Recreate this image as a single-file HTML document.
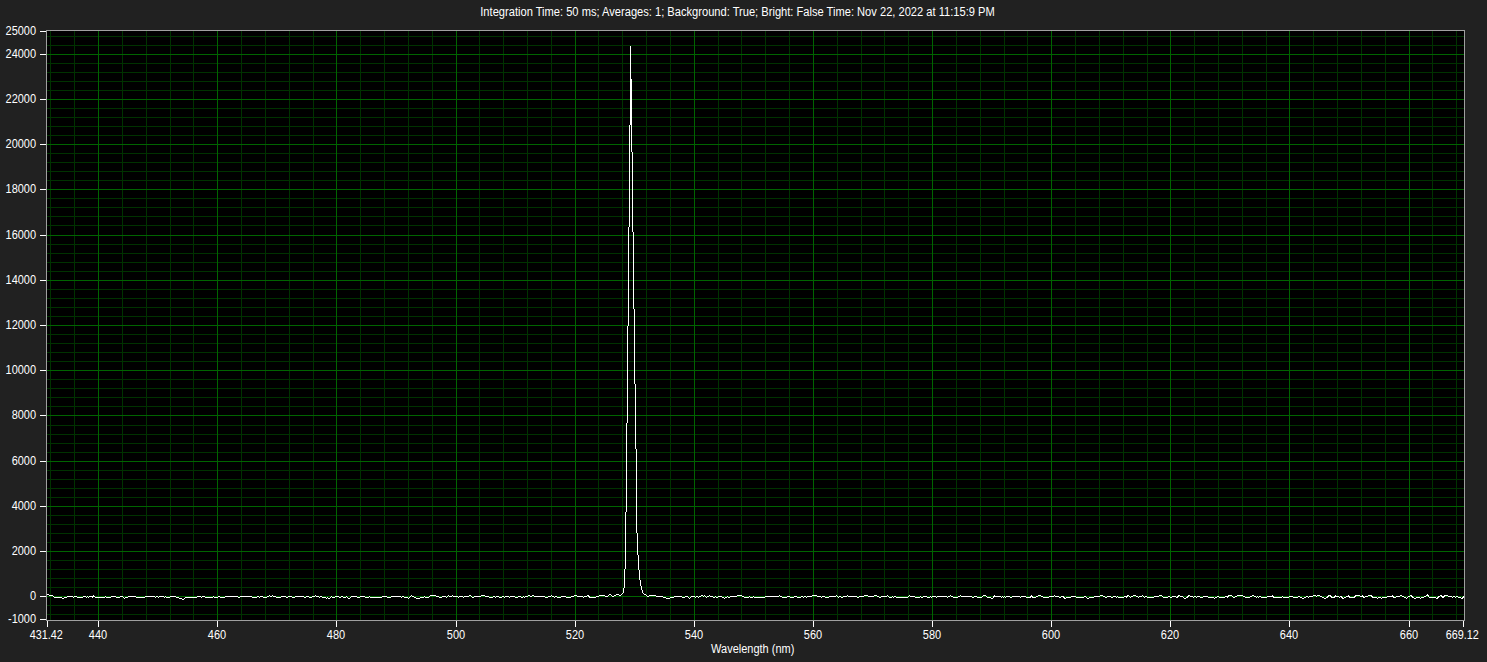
<!DOCTYPE html>
<html><head><meta charset="utf-8"><title>Spectrum</title>
<style>html,body{margin:0;padding:0;background:#212121;overflow:hidden}svg{display:block}text{font-family:"Liberation Sans",Arial,sans-serif;font-size:11px;fill:#fff}</style>
</head><body>
<svg width="1487" height="662" viewBox="0 0 1487 662" shape-rendering="crispEdges">
<rect x="0" y="0" width="1487" height="662" fill="#212121"/>
<rect x="46" y="30" width="1419" height="591" fill="#a0a0a0"/>
<rect x="47" y="31" width="1417" height="589" fill="#000"/>
<path fill="#003200" d="M50 31h1v589h-1zM74 31h1v589h-1zM122 31h1v589h-1zM146 31h1v589h-1zM170 31h1v589h-1zM193 31h1v589h-1zM241 31h1v589h-1zM265 31h1v589h-1zM289 31h1v589h-1zM313 31h1v589h-1zM360 31h1v589h-1zM384 31h1v589h-1zM408 31h1v589h-1zM432 31h1v589h-1zM479 31h1v589h-1zM503 31h1v589h-1zM527 31h1v589h-1zM551 31h1v589h-1zM598 31h1v589h-1zM622 31h1v589h-1zM646 31h1v589h-1zM670 31h1v589h-1zM718 31h1v589h-1zM741 31h1v589h-1zM765 31h1v589h-1zM789 31h1v589h-1zM837 31h1v589h-1zM861 31h1v589h-1zM884 31h1v589h-1zM908 31h1v589h-1zM956 31h1v589h-1zM980 31h1v589h-1zM1004 31h1v589h-1zM1027 31h1v589h-1zM1075 31h1v589h-1zM1099 31h1v589h-1zM1123 31h1v589h-1zM1147 31h1v589h-1zM1194 31h1v589h-1zM1218 31h1v589h-1zM1242 31h1v589h-1zM1266 31h1v589h-1zM1313 31h1v589h-1zM1337 31h1v589h-1zM1361 31h1v589h-1zM1385 31h1v589h-1zM1432 31h1v589h-1zM1456 31h1v589h-1zM47 614h1417v1h-1417zM47 605h1417v1h-1417zM47 587h1417v1h-1417zM47 578h1417v1h-1417zM47 569h1417v1h-1417zM47 560h1417v1h-1417zM47 542h1417v1h-1417zM47 533h1417v1h-1417zM47 524h1417v1h-1417zM47 515h1417v1h-1417zM47 497h1417v1h-1417zM47 488h1417v1h-1417zM47 479h1417v1h-1417zM47 470h1417v1h-1417zM47 452h1417v1h-1417zM47 443h1417v1h-1417zM47 434h1417v1h-1417zM47 425h1417v1h-1417zM47 406h1417v1h-1417zM47 397h1417v1h-1417zM47 388h1417v1h-1417zM47 379h1417v1h-1417zM47 361h1417v1h-1417zM47 352h1417v1h-1417zM47 343h1417v1h-1417zM47 334h1417v1h-1417zM47 316h1417v1h-1417zM47 307h1417v1h-1417zM47 298h1417v1h-1417zM47 289h1417v1h-1417zM47 271h1417v1h-1417zM47 262h1417v1h-1417zM47 253h1417v1h-1417zM47 244h1417v1h-1417zM47 225h1417v1h-1417zM47 216h1417v1h-1417zM47 207h1417v1h-1417zM47 198h1417v1h-1417zM47 180h1417v1h-1417zM47 171h1417v1h-1417zM47 162h1417v1h-1417zM47 153h1417v1h-1417zM47 135h1417v1h-1417zM47 126h1417v1h-1417zM47 117h1417v1h-1417zM47 108h1417v1h-1417zM47 90h1417v1h-1417zM47 81h1417v1h-1417zM47 72h1417v1h-1417zM47 63h1417v1h-1417zM47 45h1417v1h-1417zM47 36h1417v1h-1417z"/>
<path fill="#006400" d="M98 31h1v589h-1zM217 31h1v589h-1zM336 31h1v589h-1zM456 31h1v589h-1zM575 31h1v589h-1zM694 31h1v589h-1zM813 31h1v589h-1zM932 31h1v589h-1zM1051 31h1v589h-1zM1170 31h1v589h-1zM1289 31h1v589h-1zM1409 31h1v589h-1zM47 596h1417v1h-1417zM47 551h1417v1h-1417zM47 506h1417v1h-1417zM47 461h1417v1h-1417zM47 415h1417v1h-1417zM47 370h1417v1h-1417zM47 325h1417v1h-1417zM47 280h1417v1h-1417zM47 235h1417v1h-1417zM47 189h1417v1h-1417zM47 144h1417v1h-1417zM47 99h1417v1h-1417zM47 54h1417v1h-1417z"/>
<path fill="#fff" d="M40 619h6v1h-6zM40 596h6v1h-6zM40 551h6v1h-6zM40 506h6v1h-6zM40 461h6v1h-6zM40 415h6v1h-6zM40 370h6v1h-6zM40 325h6v1h-6zM40 280h6v1h-6zM40 235h6v1h-6zM40 189h6v1h-6zM40 144h6v1h-6zM40 99h6v1h-6zM40 54h6v1h-6zM40 31h6v1h-6zM47 621h1v6h-1zM98 621h1v6h-1zM217 621h1v6h-1zM336 621h1v6h-1zM456 621h1v6h-1zM575 621h1v6h-1zM694 621h1v6h-1zM813 621h1v6h-1zM932 621h1v6h-1zM1051 621h1v6h-1zM1170 621h1v6h-1zM1289 621h1v6h-1zM1409 621h1v6h-1zM1463 621h1v6h-1z"/>
<path fill="#fff" d="M47 594h2v1h-2zM49 595h4v1h-4zM53 596h1v1h-1zM54 597h8v1h-8zM62 598h2v1h-2zM64 597h3v1h-3zM67 596h6v1h-6zM73 597h1v1h-1zM74 596h3v1h-3zM77 597h6v1h-6zM83 596h3v1h-3zM86 597h1v1h-1zM87 596h1v1h-1zM88 597h1v1h-1zM89 596h3v1h-3zM92 596h1v2h-1zM93 595h1v2h-1zM94 596h1v1h-1zM95 597h10v1h-10zM105 596h1v1h-1zM106 597h5v1h-5zM111 596h5v1h-5zM116 597h4v1h-4zM120 596h3v1h-3zM123 597h1v1h-1zM124 598h1v1h-1zM125 597h3v1h-3zM128 596h8v1h-8zM136 597h9v1h-9zM145 596h10v1h-10zM155 597h1v1h-1zM156 596h2v1h-2zM158 597h1v1h-1zM159 596h5v1h-5zM164 597h1v1h-1zM165 596h1v1h-1zM166 597h4v1h-4zM170 596h6v1h-6zM176 597h3v1h-3zM179 598h3v1h-3zM182 599h2v1h-2zM184 598h1v1h-1zM185 597h12v1h-12zM197 596h4v1h-4zM201 597h1v1h-1zM202 596h3v1h-3zM205 597h8v1h-8zM213 596h1v1h-1zM214 597h4v1h-4zM218 596h2v1h-2zM220 597h5v1h-5zM225 596h13v1h-13zM238 597h2v1h-2zM240 596h12v1h-12zM252 597h5v1h-5zM257 596h2v1h-2zM259 597h1v1h-1zM260 596h3v1h-3zM263 597h4v1h-4zM267 596h2v1h-2zM269 595h1v1h-1zM270 596h2v1h-2zM272 595h1v1h-1zM273 596h3v1h-3zM276 597h5v1h-5zM281 596h5v1h-5zM286 597h2v1h-2zM288 596h4v1h-4zM292 597h3v1h-3zM295 596h9v1h-9zM304 597h2v1h-2zM306 596h3v1h-3zM309 597h3v1h-3zM312 596h3v1h-3zM315 595h1v1h-1zM316 596h3v1h-3zM319 597h1v1h-1zM320 596h2v1h-2zM322 597h4v1h-4zM326 598h1v1h-1zM327 597h1v1h-1zM328 598h2v1h-2zM330 597h1v1h-1zM331 596h1v1h-1zM332 597h3v1h-3zM335 596h4v1h-4zM339 597h2v1h-2zM341 596h2v1h-2zM343 597h3v1h-3zM346 596h1v1h-1zM347 597h1v1h-1zM348 598h2v1h-2zM350 597h1v1h-1zM351 596h6v1h-6zM357 597h3v1h-3zM360 596h5v1h-5zM365 597h4v1h-4zM369 596h1v1h-1zM370 597h12v1h-12zM382 596h5v1h-5zM387 597h4v1h-4zM391 596h10v1h-10zM401 597h1v1h-1zM402 596h2v1h-2zM404 597h4v1h-4zM408 598h1v1h-1zM409 597h1v1h-1zM410 596h1v1h-1zM411 595h1v1h-1zM412 596h2v1h-2zM414 597h2v1h-2zM416 598h4v1h-4zM420 597h4v1h-4zM424 596h1v1h-1zM425 597h4v1h-4zM429 596h1v1h-1zM430 595h6v1h-6zM436 596h3v1h-3zM439 597h3v1h-3zM442 596h4v1h-4zM446 597h1v1h-1zM447 596h1v1h-1zM448 595h1v1h-1zM449 596h3v1h-3zM452 595h1v1h-1zM453 596h5v1h-5zM458 597h1v1h-1zM459 596h4v1h-4zM463 597h1v1h-1zM464 596h5v1h-5zM469 595h2v1h-2zM471 596h1v1h-1zM472 597h2v1h-2zM474 596h7v1h-7zM481 595h4v1h-4zM485 596h4v1h-4zM489 597h4v1h-4zM493 596h2v1h-2zM495 597h1v1h-1zM496 596h3v1h-3zM499 597h3v1h-3zM502 596h2v1h-2zM504 597h1v1h-1zM505 596h4v1h-4zM509 597h1v1h-1zM510 596h5v1h-5zM515 597h3v1h-3zM518 596h3v1h-3zM521 597h2v1h-2zM523 596h1v1h-1zM524 597h1v1h-1zM525 596h3v1h-3zM528 595h2v1h-2zM530 596h2v1h-2zM532 595h2v1h-2zM534 596h11v1h-11zM545 597h3v1h-3zM548 596h3v1h-3zM551 595h1v1h-1zM552 596h2v1h-2zM554 597h1v1h-1zM555 596h2v1h-2zM557 597h4v1h-4zM561 596h5v1h-5zM566 597h5v1h-5zM571 596h3v1h-3zM574 595h3v1h-3zM577 596h6v1h-6zM583 597h1v1h-1zM584 596h3v1h-3zM587 595h1v1h-1zM588 595h1v2h-1zM589 596h1v2h-1zM590 597h6v1h-6zM596 596h3v1h-3zM599 595h6v1h-6zM605 596h3v1h-3zM608 595h1v1h-1zM609 594h2v1h-2zM611 595h1v1h-1zM612 596h2v1h-2zM614 595h2v1h-2zM616 594h3v1h-3zM619 595h2v1h-2zM621 594h1v1h-1zM622 593h1v1h-1zM623 588h1v5h-1zM624 569h1v19h-1zM625 512h1v57h-1zM626 423h1v89h-1zM627 326h1v97h-1zM628 227h1v99h-1zM629 125h1v102h-1zM630 46h1v79h-1zM631 79h1v73h-1zM632 152h1v80h-1zM633 232h1v77h-1zM634 309h1v75h-1zM635 384h1v65h-1zM636 449h1v84h-1zM637 533h1v22h-1zM638 555h1v15h-1zM639 570h1v10h-1zM640 580h1v6h-1zM641 586h1v4h-1zM642 590h1v3h-1zM643 593h1v1h-1zM644 594h2v1h-2zM646 595h1v1h-1zM647 596h2v1h-2zM649 595h7v1h-7zM656 596h7v1h-7zM663 597h3v1h-3zM666 598h4v1h-4zM670 597h4v1h-4zM674 596h8v1h-8zM682 597h3v1h-3zM685 596h3v1h-3zM688 597h1v1h-1zM689 598h1v1h-1zM690 597h1v1h-1zM691 596h4v1h-4zM695 597h1v1h-1zM696 596h2v1h-2zM698 597h1v1h-1zM699 596h2v1h-2zM701 595h2v1h-2zM703 596h1v1h-1zM704 595h1v1h-1zM705 596h1v1h-1zM706 597h1v1h-1zM707 596h2v1h-2zM709 595h1v1h-1zM710 596h3v1h-3zM713 597h2v1h-2zM715 596h1v1h-1zM716 597h2v1h-2zM718 596h4v1h-4zM722 597h2v1h-2zM724 598h1v1h-1zM725 597h2v1h-2zM727 596h1v1h-1zM728 597h2v1h-2zM730 596h7v1h-7zM737 595h5v1h-5zM742 596h2v1h-2zM744 597h5v1h-5zM749 596h1v1h-1zM750 597h3v1h-3zM753 596h1v1h-1zM754 597h11v1h-11zM765 596h14v1h-14zM779 595h1v1h-1zM780 596h2v1h-2zM782 597h5v1h-5zM787 596h3v1h-3zM790 597h4v1h-4zM794 596h3v1h-3zM797 597h4v1h-4zM801 596h2v1h-2zM803 597h1v1h-1zM804 596h2v1h-2zM806 597h1v1h-1zM807 596h5v1h-5zM812 595h5v1h-5zM817 596h4v1h-4zM821 597h1v1h-1zM822 596h3v1h-3zM825 597h4v1h-4zM829 596h7v1h-7zM836 595h1v1h-1zM837 596h1v1h-1zM838 597h1v1h-1zM839 596h2v1h-2zM841 597h2v1h-2zM843 596h4v1h-4zM847 595h1v1h-1zM848 596h9v1h-9zM857 597h2v1h-2zM859 596h5v1h-5zM864 595h4v1h-4zM868 596h6v1h-6zM874 595h3v1h-3zM877 596h2v1h-2zM879 597h2v1h-2zM881 596h6v1h-6zM887 595h1v1h-1zM888 596h1v1h-1zM889 597h3v1h-3zM892 596h1v1h-1zM893 597h1v1h-1zM894 596h2v1h-2zM896 597h12v1h-12zM908 596h1v1h-1zM909 595h1v1h-1zM910 596h5v1h-5zM915 597h5v1h-5zM920 596h1v1h-1zM921 597h2v1h-2zM923 596h4v1h-4zM927 597h3v1h-3zM930 596h1v1h-1zM931 597h1v1h-1zM932 596h4v1h-4zM936 597h1v1h-1zM937 596h10v1h-10zM947 597h1v1h-1zM948 596h2v1h-2zM950 595h1v1h-1zM951 596h2v1h-2zM953 597h5v1h-5zM958 596h2v1h-2zM960 595h1v1h-1zM961 596h11v1h-11zM972 597h2v1h-2zM974 596h3v1h-3zM977 597h5v1h-5zM982 596h1v1h-1zM983 595h3v1h-3zM986 596h1v1h-1zM987 597h4v1h-4zM991 598h2v1h-2zM993 596h1v2h-1zM994 595h1v2h-1zM995 596h6v1h-6zM1001 597h1v1h-1zM1002 596h1v1h-1zM1003 597h1v1h-1zM1004 596h1v1h-1zM1005 597h1v1h-1zM1006 596h4v1h-4zM1010 597h2v1h-2zM1012 596h8v1h-8zM1020 597h1v1h-1zM1021 596h5v1h-5zM1026 597h4v1h-4zM1030 596h1v2h-1zM1031 595h1v2h-1zM1032 596h1v2h-1zM1033 597h3v1h-3zM1036 596h2v1h-2zM1038 595h3v1h-3zM1041 596h2v1h-2zM1043 597h6v1h-6zM1049 596h5v1h-5zM1054 595h1v1h-1zM1055 596h4v1h-4zM1059 597h2v1h-2zM1061 596h2v1h-2zM1063 596h1v2h-1zM1064 597h1v2h-1zM1065 598h1v1h-1zM1066 597h5v1h-5zM1071 596h5v1h-5zM1076 597h8v1h-8zM1084 596h2v1h-2zM1086 597h1v1h-1zM1087 598h2v1h-2zM1089 597h5v1h-5zM1094 596h6v1h-6zM1100 595h3v1h-3zM1103 596h2v1h-2zM1105 597h2v1h-2zM1107 596h4v1h-4zM1111 597h2v1h-2zM1113 596h3v1h-3zM1116 597h1v1h-1zM1117 596h1v1h-1zM1118 597h6v1h-6zM1124 596h2v1h-2zM1126 596h1v2h-1zM1127 595h1v2h-1zM1128 595h1v1h-1zM1129 596h1v1h-1zM1130 597h1v1h-1zM1131 596h2v1h-2zM1133 595h3v1h-3zM1136 596h2v1h-2zM1138 597h1v1h-1zM1139 596h3v1h-3zM1142 595h1v1h-1zM1143 596h1v1h-1zM1144 597h1v1h-1zM1145 596h2v1h-2zM1147 597h7v1h-7zM1154 596h5v1h-5zM1159 595h3v1h-3zM1162 596h1v1h-1zM1163 597h5v1h-5zM1168 596h2v1h-2zM1170 597h2v1h-2zM1172 596h4v1h-4zM1176 597h1v1h-1zM1177 596h1v2h-1zM1178 595h1v2h-1zM1179 595h1v1h-1zM1180 596h3v1h-3zM1183 597h1v1h-1zM1184 598h2v1h-2zM1186 597h1v1h-1zM1187 596h1v2h-1zM1188 595h1v2h-1zM1189 595h1v1h-1zM1190 596h3v1h-3zM1193 597h1v1h-1zM1194 596h2v1h-2zM1196 597h1v1h-1zM1197 596h3v1h-3zM1200 597h3v1h-3zM1203 596h5v1h-5zM1208 597h6v1h-6zM1214 598h1v1h-1zM1215 597h2v1h-2zM1217 596h2v1h-2zM1219 597h6v1h-6zM1225 596h2v1h-2zM1227 596h1v2h-1zM1228 595h1v2h-1zM1229 595h3v1h-3zM1232 596h1v1h-1zM1233 597h2v1h-2zM1235 596h2v1h-2zM1237 595h6v1h-6zM1243 596h2v1h-2zM1245 597h5v1h-5zM1250 596h2v1h-2zM1252 595h2v1h-2zM1254 596h2v1h-2zM1256 597h1v1h-1zM1257 596h1v1h-1zM1258 597h1v1h-1zM1259 596h2v1h-2zM1261 597h6v1h-6zM1267 596h5v1h-5zM1272 595h1v2h-1zM1273 596h1v2h-1zM1274 597h8v1h-8zM1282 596h1v1h-1zM1283 597h6v1h-6zM1289 596h4v1h-4zM1293 597h5v1h-5zM1298 596h2v1h-2zM1300 597h2v1h-2zM1302 598h2v1h-2zM1304 597h2v1h-2zM1306 596h2v1h-2zM1308 597h1v1h-1zM1309 596h4v1h-4zM1313 595h3v1h-3zM1316 596h1v1h-1zM1317 595h3v1h-3zM1320 596h2v1h-2zM1322 597h2v1h-2zM1324 598h2v1h-2zM1326 597h1v1h-1zM1327 596h1v2h-1zM1328 595h1v2h-1zM1329 595h1v1h-1zM1330 595h1v2h-1zM1331 596h1v2h-1zM1332 597h2v1h-2zM1334 596h1v2h-1zM1335 595h1v2h-1zM1336 596h3v1h-3zM1339 597h1v1h-1zM1340 596h1v1h-1zM1341 596h1v2h-1zM1342 597h1v2h-1zM1343 598h1v1h-1zM1344 597h2v1h-2zM1346 596h2v1h-2zM1348 595h1v2h-1zM1349 596h1v2h-1zM1350 597h4v1h-4zM1354 596h1v2h-1zM1355 595h1v2h-1zM1356 595h4v1h-4zM1360 596h2v1h-2zM1362 595h1v2h-1zM1363 596h1v2h-1zM1364 597h1v1h-1zM1365 596h3v1h-3zM1368 595h3v1h-3zM1371 595h1v2h-1zM1372 596h1v2h-1zM1373 597h4v1h-4zM1377 598h1v1h-1zM1378 597h3v1h-3zM1381 598h1v1h-1zM1382 597h5v1h-5zM1387 596h5v1h-5zM1392 595h1v2h-1zM1393 596h1v2h-1zM1394 597h2v1h-2zM1396 596h4v1h-4zM1400 595h2v1h-2zM1402 596h2v1h-2zM1404 597h2v1h-2zM1406 598h1v1h-1zM1407 597h1v1h-1zM1408 596h2v1h-2zM1410 595h1v1h-1zM1411 595h1v2h-1zM1412 596h1v2h-1zM1413 597h1v1h-1zM1414 598h2v1h-2zM1416 597h4v1h-4zM1420 598h1v1h-1zM1421 597h3v1h-3zM1424 596h2v1h-2zM1426 595h1v1h-1zM1427 594h1v2h-1zM1428 595h1v2h-1zM1429 597h7v1h-7zM1436 598h1v1h-1zM1437 597h1v2h-1zM1438 596h1v2h-1zM1439 596h1v1h-1zM1440 595h1v1h-1zM1441 595h1v2h-1zM1442 596h2v2h-2zM1444 595h1v2h-1zM1445 595h3v1h-3zM1448 596h4v1h-4zM1452 597h1v1h-1zM1453 596h2v1h-2zM1455 597h1v1h-1zM1456 596h2v1h-2zM1458 597h3v1h-3zM1461 598h1v1h-1zM1462 597h1v2h-1zM1463 596h1v2h-1z"/>
<g fill="#fff" font-family="'Liberation Sans', Arial, sans-serif" font-size="11"><text transform="translate(36.1 623) scale(1.0 1.15)" text-anchor="end">-1000</text><text transform="translate(36.1 600) scale(1.0 1.15)" text-anchor="end">0</text><text transform="translate(36.1 555) scale(1.0 1.15)" text-anchor="end">2000</text><text transform="translate(36.1 510) scale(1.0 1.15)" text-anchor="end">4000</text><text transform="translate(36.1 465) scale(1.0 1.15)" text-anchor="end">6000</text><text transform="translate(36.1 419) scale(1.0 1.15)" text-anchor="end">8000</text><text transform="translate(36.1 374) scale(1.0 1.15)" text-anchor="end">10000</text><text transform="translate(36.1 329) scale(1.0 1.15)" text-anchor="end">12000</text><text transform="translate(36.1 284) scale(1.0 1.15)" text-anchor="end">14000</text><text transform="translate(36.1 239) scale(1.0 1.15)" text-anchor="end">16000</text><text transform="translate(36.1 193) scale(1.0 1.15)" text-anchor="end">18000</text><text transform="translate(36.1 148) scale(1.0 1.15)" text-anchor="end">20000</text><text transform="translate(36.1 103) scale(1.0 1.15)" text-anchor="end">22000</text><text transform="translate(36.1 58) scale(1.0 1.15)" text-anchor="end">24000</text><text transform="translate(36.1 35) scale(1.0 1.15)" text-anchor="end">25000</text><text transform="translate(46.3 639) scale(0.985 1.15)" text-anchor="middle">431.42</text><text transform="translate(98 639) scale(1.0 1.15)" text-anchor="middle">440</text><text transform="translate(217 639) scale(1.0 1.15)" text-anchor="middle">460</text><text transform="translate(336 639) scale(1.0 1.15)" text-anchor="middle">480</text><text transform="translate(456 639) scale(1.0 1.15)" text-anchor="middle">500</text><text transform="translate(575 639) scale(1.0 1.15)" text-anchor="middle">520</text><text transform="translate(694 639) scale(1.0 1.15)" text-anchor="middle">540</text><text transform="translate(813 639) scale(1.0 1.15)" text-anchor="middle">560</text><text transform="translate(932 639) scale(1.0 1.15)" text-anchor="middle">580</text><text transform="translate(1051 639) scale(1.0 1.15)" text-anchor="middle">600</text><text transform="translate(1170 639) scale(1.0 1.15)" text-anchor="middle">620</text><text transform="translate(1289 639) scale(1.0 1.15)" text-anchor="middle">640</text><text transform="translate(1409 639) scale(1.0 1.15)" text-anchor="middle">660</text><text transform="translate(1462.3 639) scale(0.985 1.15)" text-anchor="middle">669.12</text><text transform="translate(752.7 653) scale(1.0 1.15)" text-anchor="middle">Wavelength (nm)</text><text transform="translate(737.5 15.7) scale(1.0114 1.15)" text-anchor="middle" id="title">Integration Time: 50 ms; Averages: 1; Background: True; Bright: False Time: Nov 22, 2022 at 11:15:9 PM</text></g>
</svg>
</body></html>
